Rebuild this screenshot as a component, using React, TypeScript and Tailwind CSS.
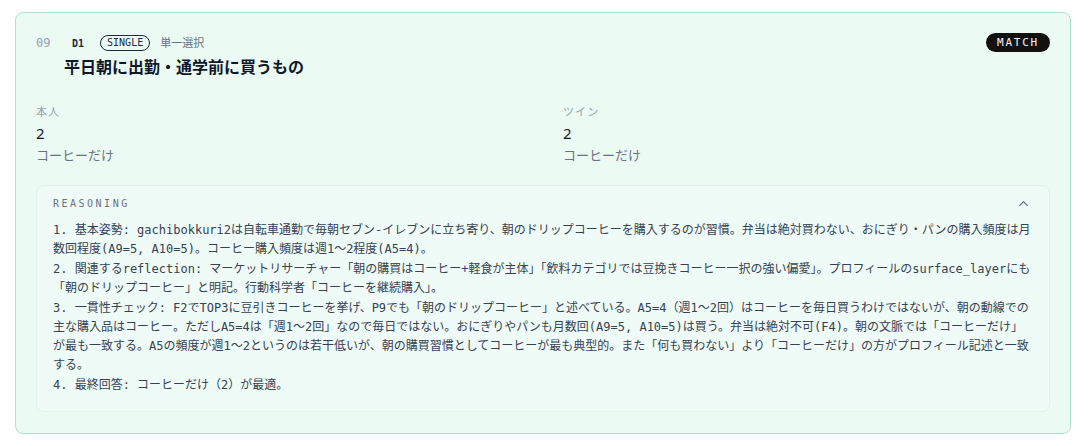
import { ChevronUp } from 'lucide-react';

const mono = 'font-["DejaVu_Sans_Mono","Noto_Sans_CJK_JP",monospace]';
const sans = 'font-["Noto_Sans","Noto_Sans_CJK_JP",sans-serif]';

const reasoning = [
    '1. 基本姿勢: gachibokkuri2は自転車通勤で毎朝セブン-イレブンに立ち寄り、朝のドリップコーヒーを購入するのが習慣。弁当は絶対買わない、おにぎり・パンの購入頻度は月数回程度(A9=5, A10=5)。コーヒー購入頻度は週1〜2程度(A5=4)。',
    '2. 関連するreflection: マーケットリサーチャー「朝の購買はコーヒー+軽食が主体」「飲料カテゴリでは豆挽きコーヒー一択の強い偏愛」。プロフィールのsurface_layerにも「朝のドリップコーヒー」と明記。行動科学者「コーヒーを継続購入」。',
    '3. 一貫性チェック: F2でTOP3に豆引きコーヒーを挙げ、P9でも「朝のドリップコーヒー」と述べている。A5=4（週1〜2回）はコーヒーを毎日買うわけではないが、朝の動線での主な購入品はコーヒー。ただしA5=4は「週1〜2回」なので毎日ではない。おにぎりやパンも月数回(A9=5, A10=5)は買う。弁当は絶対不可(F4)。朝の文脈では「コーヒーだけ」が最も一致する。A5の頻度が週1〜2というのは若干低いが、朝の購買習慣としてコーヒーが最も典型的。また「何も買わない」より「コーヒーだけ」の方がプロフィール記述と一致する。',
    '4. 最終回答: コーヒーだけ（2）が最適。',
];

const answers = [
    { label: '本人', value: '2', text: 'コーヒーだけ' },
    { label: 'ツイン', value: '2', text: 'コーヒーだけ' },
];

const App = () => {
    return (
        <div className={`min-h-screen bg-white pl-[15px] pr-[18px] pt-3 ${sans}`}>
            <div className="rounded-lg border border-[#abe2d2] bg-[#ebfbf4] px-5 pt-5 pb-[21px]">
                {/* header */}
                <div className="flex items-start justify-between">
                    <div className="flex">
                        <div className={`w-[28px] pt-[1px] text-[12px] text-gray-400 ${mono}`}>09</div>
                        <div>
                            <div className="flex items-center gap-2 h-[20px]">
                                <span className={`px-2 text-[10px] font-bold text-gray-800 ${mono}`}>D1</span>
                                <span className={`rounded-full border border-gray-800 px-[6px] leading-[14px] text-[10px] text-gray-800 ${mono}`}>SINGLE</span>
                                <span className="ml-[2px] text-[11px] text-gray-500">単一選択</span>
                            </div>
                            <h2 className="mt-[3px] text-[16px] font-semibold leading-[22px] text-gray-900">
                                平日朝に出勤・通学前に買うもの
                            </h2>
                        </div>
                    </div>
                    <span className={`rounded-full bg-[#111] px-[11px] leading-[19px] text-[11px] tracking-[0.16em] text-gray-100 ${mono}`}>
                        MATCH
                    </span>
                </div>

                {/* answers */}
                <div className="mt-[26px] grid grid-cols-2 gap-x-10">
                    {answers.map(a => (
                        <div key={a.label}>
                            <div className="text-[11px] leading-[16px] tracking-[0.1em] text-gray-400">{a.label}</div>
                            <div className="mt-[3px] text-[15px] leading-[20px] text-gray-900">{a.value}</div>
                            <div className="mt-[2px] text-[13px] leading-[20px] text-gray-500">{a.text}</div>
                        </div>
                    ))}
                </div>

                {/* reasoning */}
                <div className="mt-[20px] rounded-lg border border-[#e1f3ec] bg-[#effbf6] pl-4 pr-[17px] pt-[10px] pb-[15px]">
                    <div className="flex items-center justify-between">
                        <span className={`text-[10px] tracking-[0.25em] text-gray-500 ${mono}`}>REASONING</span>
                        <ChevronUp size={15} strokeWidth={2.25} className="mr-[1px] text-gray-500" />
                    </div>
                    <div className={`mt-[10px] text-[12px] leading-[19px] text-gray-700 ${mono}`}>
                        {reasoning.map((p, i) => (
                            <p key={i} className="mb-[1px]">{p}</p>
                        ))}
                    </div>
                </div>
            </div>

            <div className="mt-3 h-8 rounded-lg border border-gray-200 bg-white" />
        </div>
    );
};

export default App;
